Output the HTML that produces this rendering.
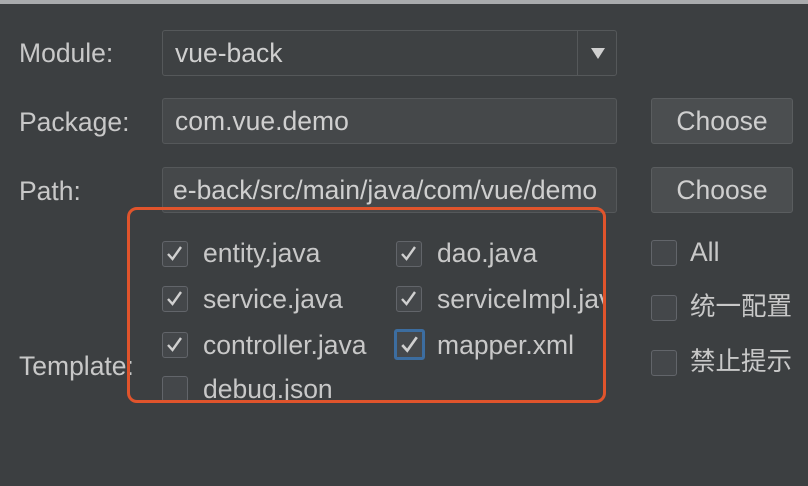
<!DOCTYPE html>
<html><head><meta charset="utf-8"><style>
html,body{margin:0;padding:0}
body{width:808px;height:486px;background:#3c3f41;position:relative;overflow:hidden;font-family:"Liberation Sans","Noto Sans CJK SC",sans-serif;color:#c8c8c8;font-size:26.5px}
.a{position:absolute}
.lbl{position:absolute;left:19px;line-height:30px}
.field{position:absolute;left:162px;width:455px;height:46px;border:1px solid #55585a;background:#45484a;border-radius:3px;box-sizing:border-box;line-height:44px;padding-left:12px;color:#cfcfcf;white-space:nowrap;overflow:hidden}
.btn{position:absolute;left:651px;width:142px;height:46px;background:#4b4e50;border:1px solid #5a5d5f;border-radius:3px;box-sizing:border-box;text-align:center;line-height:44px;color:#cfcfcf}
.cb{position:absolute;width:26px;height:26px;border:1.5px solid #62656a;background:#44474a;border-radius:3px;box-sizing:border-box}
.cb svg{position:absolute;left:3px;top:3px}
.t{position:absolute;line-height:28px;white-space:nowrap}
.cj{font-size:25.5px}
</style></head><body>
<div class="a" style="left:0;top:0;width:808px;height:4px;background:#a9abad"></div>
<div class="lbl" style="top:38px">Module:</div>
<div class="field" style="top:30px;background:#3e4143">vue-back</div>
<div class="a" style="left:577px;top:31px;width:1px;height:44px;background:#55585a"></div>
<div class="a" style="left:591px;top:48px;width:0;height:0;border-left:7px solid transparent;border-right:7px solid transparent;border-top:11px solid #cfcfcf"></div>
<div class="lbl" style="top:107px">Package:</div>
<div class="field" style="top:98px">com.vue.demo</div>
<div class="btn" style="top:98px">Choose</div>
<div class="lbl" style="top:176px">Path:</div>
<div class="field" style="top:167px;padding-left:10px">e-back/src/main/java/com/vue/demo</div>
<div class="btn" style="top:167px">Choose</div>
<div class="lbl" style="top:351px">Template:</div>
<div class="a" style="left:127px;top:207px;width:479px;height:196px;border:3px solid #e0542c;border-radius:10px;box-sizing:border-box;overflow:hidden">
  <div class="cb" style="left:32px;top:31px"><svg width="17" height="17" viewBox="0 0 17 17"><path d="M2 9 L6.5 14 L15 2" fill="none" stroke="#d0d0d0" stroke-width="2.4"/></svg></div>
  <div class="t" style="left:73px;top:29px">entity.java</div>
  <div class="cb" style="left:32px;top:76px"><svg width="17" height="17" viewBox="0 0 17 17"><path d="M2 9 L6.5 14 L15 2" fill="none" stroke="#d0d0d0" stroke-width="2.4"/></svg></div>
  <div class="t" style="left:73px;top:75px">service.java</div>
  <div class="cb" style="left:32px;top:122px"><svg width="17" height="17" viewBox="0 0 17 17"><path d="M2 9 L6.5 14 L15 2" fill="none" stroke="#d0d0d0" stroke-width="2.4"/></svg></div>
  <div class="t" style="left:73px;top:121px">controller.java</div>
  <div class="cb" style="left:32px;top:166px"></div>
  <div class="t" style="left:73px;top:165px">debug.json</div>
  <div class="cb" style="left:266px;top:31px"><svg width="17" height="17" viewBox="0 0 17 17"><path d="M2 9 L6.5 14 L15 2" fill="none" stroke="#d0d0d0" stroke-width="2.4"/></svg></div>
  <div class="t" style="left:307px;top:29px">dao.java</div>
  <div class="cb" style="left:266px;top:76px"><svg width="17" height="17" viewBox="0 0 17 17"><path d="M2 9 L6.5 14 L15 2" fill="none" stroke="#d0d0d0" stroke-width="2.4"/></svg></div>
  <div class="t" style="left:307px;top:75px">serviceImpl.java</div>
  <div class="cb" style="left:264px;top:119px;width:31px;height:31px;border:3px solid #3c6da0;background:#45484b"><svg width="19" height="19" viewBox="0 0 17 17" style="left:3px;top:3px"><path d="M2 9 L6.5 14 L15 2" fill="none" stroke="#d0d0d0" stroke-width="2.4"/></svg></div>
  <div class="t" style="left:307px;top:121px">mapper.xml</div>
</div>
<div class="cb" style="left:651px;top:240px"></div>
<div class="t" style="left:690px;top:238px">All</div>
<div class="cb" style="left:651px;top:295px"></div>
<div class="t cj" style="left:690px;top:293px">统一配置</div>
<div class="cb" style="left:651px;top:350px"></div>
<div class="t cj" style="left:690px;top:348px">禁止提示</div>
</body></html>
